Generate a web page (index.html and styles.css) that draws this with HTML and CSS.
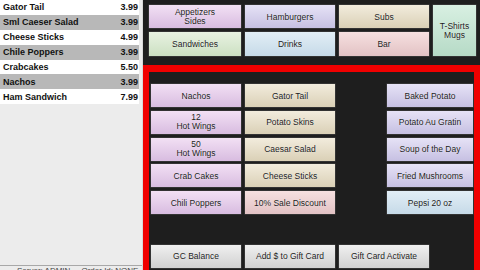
FILE: index.html
```html
<!DOCTYPE html>
<html>
<head>
<meta charset="utf-8">
<link rel="stylesheet" href="styles.css">
</head>
<body>
<div class="app">
  <aside class="ticket">
    <div class="items">
      <div class="row"><span>Gator Tail</span><span>3.99</span></div>
      <div class="row sel"><span>Sml Caeser Salad</span><span>3.99</span></div>
      <div class="row"><span>Cheese Sticks</span><span>4.99</span></div>
      <div class="row sel"><span>Chile Poppers</span><span>3.99</span></div>
      <div class="row"><span>Crabcakes</span><span>5.50</span></div>
      <div class="row sel"><span>Nachos</span><span>3.99</span></div>
      <div class="row"><span>Ham Sandwich</span><span>7.99</span></div>
    </div>
    <div class="status">Server: ADMIN &nbsp;&nbsp;&nbsp; Order Id: NONE</div>
  </aside>
  <main class="main">
    <nav class="cats">
      <div class="btn pink two">Appetizers<br>Sides</div>
      <div class="btn lav">Hamburgers</div>
      <div class="btn beige">Subs</div>
      <div class="btn mint tall two">T-Shirts<br>Mugs</div>
      <div class="btn green">Sandwiches</div>
      <div class="btn blue">Drinks</div>
      <div class="btn rose">Bar</div>
    </nav>
    <section class="frame">
      <div class="grid">
        <div class="btn pink c1">Nachos</div>
        <div class="btn beige c2">Gator Tail</div>
        <div class="btn lav c4">Baked Potato</div>

        <div class="btn pink c1 two">12<br>Hot Wings</div>
        <div class="btn beige c2">Potato Skins</div>
        <div class="btn lav c4">Potato Au Gratin</div>

        <div class="btn pink c1 two">50<br>Hot Wings</div>
        <div class="btn beige c2">Caesar Salad</div>
        <div class="btn lav c4">Soup of the Day</div>

        <div class="btn pink c1">Crab Cakes</div>
        <div class="btn beige c2">Cheese Sticks</div>
        <div class="btn lav c4">Fried Mushrooms</div>

        <div class="btn pink c1">Chili Poppers</div>
        <div class="btn rose c2">10% Sale Discount</div>
        <div class="btn blue c4">Pepsi 20 oz</div>

        <div class="btn gray c1 r7">GC Balance</div>
        <div class="btn gray c2 r7">Add $ to Gift Card</div>
        <div class="btn gray c3 r7">Gift Card Activate</div>
      </div>
    </section>
  </main>
</div>
</body>
</html>
```
FILE: styles.css
```css
* { box-sizing: border-box; }
html, body { margin: 0; padding: 0; }
body {
  width: 480px;
  height: 270px;
  overflow: hidden;
  font-family: "Liberation Sans", Arial, sans-serif;
  background: #1e1e1e;
}
.app {
  display: flex;
  width: 480px;
  height: 270px;
}
.ticket {
  width: 143px;
  flex: none;
  background: #ececec;
  display: flex;
  flex-direction: column;
  border-right: 1px solid #d8d8d8;
}
.items {
  flex: 1;
  width: 139px;
}
.row {
  height: 14.9px;
  display: flex;
  justify-content: space-between;
  align-items: center;
  padding: 0 1px 0 3px;
  font-weight: bold;
  font-size: 9px;
  color: #111;
  background: #ffffff;
}
.row.sel { background: #b8b8b8; }
.status {
  height: 5px;
  border-top: 1px solid #a8a8a8;
  font-size: 8px;
  color: #444;
  padding: 1px 0 0 17px;
  white-space: nowrap;
  line-height: 8px;
}
.main {
  flex: 1;
  display: flex;
  flex-direction: column;
  background: #1e1e1e;
}
.cats {
  display: grid;
  grid-template-columns: 94px 92px 92px 45px;
  grid-template-rows: 25px 26px;
  gap: 2px;
  padding: 4px 0 0 5px;
  height: 65px;
}
.cats .tall { grid-column: 4; grid-row: 1 / 3; }
.frame {
  flex: 1;
  border: solid #f00000;
  border-width: 7px 6px 0 6px;
  padding: 11px 0 0 1px;
}
.grid {
  display: grid;
  grid-template-columns: 92px 92px 46px 44px 42px;
  grid-template-rows: repeat(7, 25px);
  column-gap: 2px;
  row-gap: 1.75px;
}
.c1 { grid-column: 1; }
.c2 { grid-column: 2; }
.c3 { grid-column: 3 / 5; }
.c4 { grid-column: 4 / 6; }
.r7 { grid-row: 7; }
.btn {
  display: flex;
  align-items: center;
  justify-content: center;
  text-align: center;
  font-size: 8.5px;
  line-height: 10px;
  color: #1a1a1a;
  border: 1px solid #333;
  border-radius: 1px;
  text-shadow: 0 0 1px rgba(255,255,255,0.8);
}
.btn.two { line-height: 9px; }
.pink  { background: linear-gradient(#f2e0f4, #d8bce0); }
.lav   { background: linear-gradient(#e6e2f6, #c6c0e2); }
.beige { background: linear-gradient(#f2ecdd, #dad0b6); }
.green { background: linear-gradient(#e8f2e2, #cce0c2); }
.blue  { background: linear-gradient(#e2eef6, #c6dae8); }
.rose  { background: linear-gradient(#f6e0e0, #e2c2c4); }
.mint  { background: linear-gradient(#d8f0e2, #b6dac6); }
.gray  { background: linear-gradient(#f0f0f0, #d0d0d0); }
```
